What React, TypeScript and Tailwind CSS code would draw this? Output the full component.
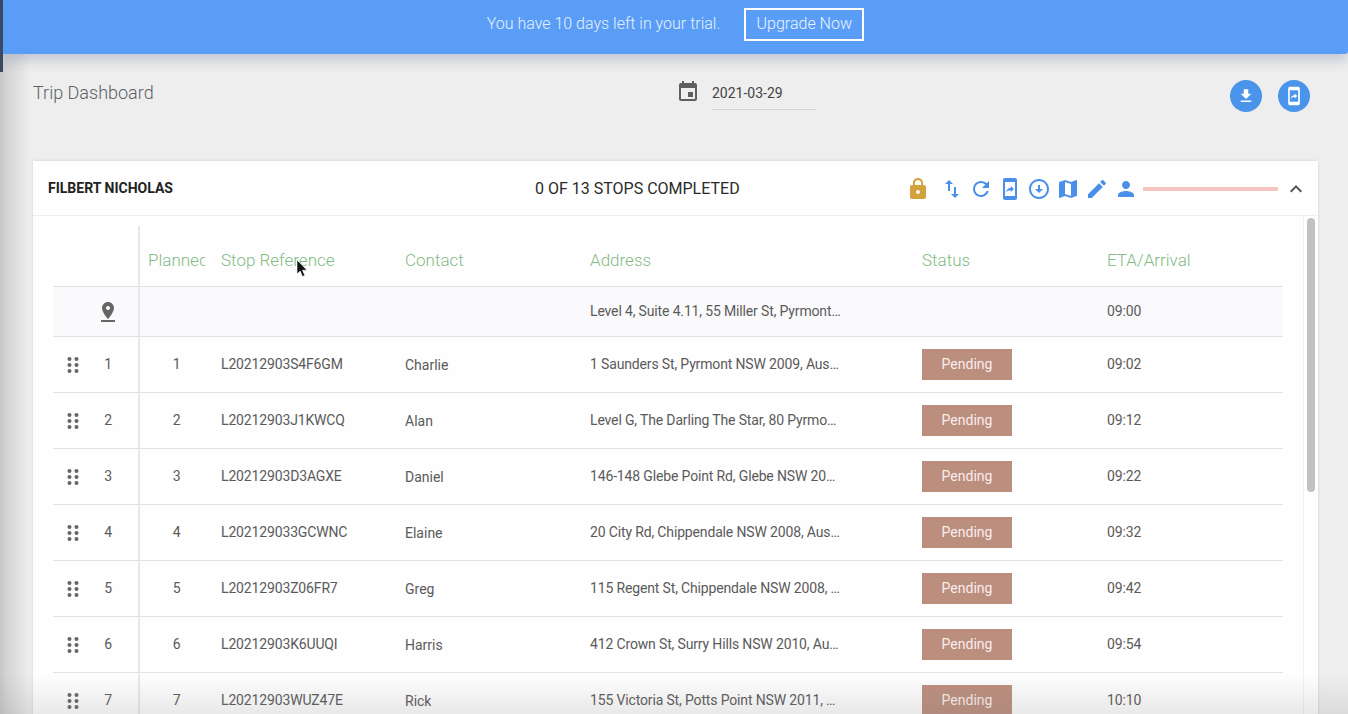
const P = {
  lock: "M18 8h-1V6c0-2.76-2.24-5-5-5S7 3.24 7 6v2H6c-1.1 0-2 .9-2 2v10c0 1.1.9 2 2 2h12c1.1 0 2-.9 2-2V10c0-1.1-.9-2-2-2zm-6 9c-1.1 0-2-.9-2-2s.9-2 2-2 2 .9 2 2-.9 2-2 2zm3.1-9H8.9V6c0-1.71 1.39-3.1 3.1-3.1 1.71 0 3.1 1.39 3.1 3.1v2z",
  swap: "M16 17.01V10h-2v7.01h-3L15 21l4-3.99h-3zM9 3L5 6.99h3V14h2V6.99h3L9 3z",
  refresh: "M17.65 6.35C16.2 4.9 14.21 4 12 4c-4.42 0-7.99 3.58-7.99 8s3.57 8 7.99 8c3.73 0 6.84-2.55 7.73-6h-2.08c-.82 2.33-3.04 4-5.65 4-3.31 0-6-2.69-6-6s2.69-6 6-6c1.66 0 3.14.69 4.22 1.78L13 11h7V4l-2.35 2.35z",
  mobile: "M17 1.01L7 1c-1.1 0-2 .9-2 2v18c0 1.1.9 2 2 2h10c1.1 0 2-.9 2-2V3c0-1.1-.9-1.99-2-1.99zM17 19H7V5h10v14zm-4.2-5.76v1.75L16 12l-3.2-2.98v1.7c-3.11.43-4.35 2.56-4.8 4.7 1.11-1.5 2.58-2.18 4.8-2.18z",
  circleDown: "M12 4c4.41 0 8 3.59 8 8s-3.59 8-8 8-8-3.59-8-8 3.59-8 8-8m0-2C6.48 2 2 6.48 2 12s4.48 10 10 10 10-4.48 10-10S17.52 2 12 2zm1 10V8h-2v4H8l4 4 4-4h-3z",
  map: "M20.5 3l-.16.03L15 5.1 9 3 3.36 4.9c-.21.07-.36.25-.36.48V20.5c0 .28.22.5.5.5l.16-.03L9 18.9l6 2.1 5.64-1.9c.21-.07.36-.25.36-.48V3.5c0-.28-.22-.5-.5-.5zM15 19l-6-2.11V5l6 2.11V19z",
  edit: "M3 17.25V21h3.75L17.81 9.94l-3.75-3.75L3 17.25zM20.71 7.04c.39-.39.39-1.02 0-1.41l-2.34-2.34c-.39-.39-1.02-.39-1.41 0l-1.83 1.83 3.75 3.75 1.83-1.83z",
  person: "M12 12c2.21 0 4-1.79 4-4s-1.79-4-4-4-4 1.79-4 4 1.79 4 4 4zm0 2c-2.67 0-8 1.34-8 4v2h16v-2c0-2.66-5.33-4-8-4z",
  less: "M12 8l-6 6 1.41 1.41L12 10.83l4.59 4.58L18 14z",
  getApp: "M19 9h-4V3H9v6H5l7 7 7-7zM5 18v2h14v-2H5z",
  event: "M17 12h-5v5h5v-5zM16 1v2H8V1H6v2H5c-1.11 0-1.99.9-1.99 2L3 19c0 1.1.89 2 2 2h14c1.1 0 2-.9 2-2V5c0-1.1-.9-2-2-2h-1V1h-2zm3 18H5V8h14v11z",
  pin: "M18 8c0-3.31-2.69-6-6-6S6 4.69 6 8c0 4.5 6 11 6 11s6-6.5 6-11zm-8 0c0-1.1.9-2 2-2s2 .9 2 2-.89 2-2 2c-1.1 0-2-.9-2-2zM5 20v2h14v-2H5z",
};

function Icon({ d, className }: { d: string; className: string }) {
  return (
    <svg viewBox="0 0 24 24" fill="currentColor" className={className}>
      <path d={d} />
    </svg>
  );
}

function Drag() {
  return (
    <svg viewBox="0 0 12 16" fill="currentColor" className="h-[16px] w-[12px] text-[#666]">
      {[2, 8, 14].map((y) => (
        <g key={y}>
          <circle cx="2.5" cy={y} r="2" />
          <circle cx="9.5" cy={y} r="2" />
        </g>
      ))}
    </svg>
  );
}

const stops = [
  ["1", "L20212903S4F6GM", "Charlie", "1 Saunders St, Pyrmont NSW 2009, Aus…", "09:02"],
  ["2", "L20212903J1KWCQ", "Alan", "Level G, The Darling The Star, 80 Pyrmo…", "09:12"],
  ["3", "L20212903D3AGXE", "Daniel", "146-148 Glebe Point Rd, Glebe NSW 20…", "09:22"],
  ["4", "L202129033GCWNC", "Elaine", "20 City Rd, Chippendale NSW 2008, Aus…", "09:32"],
  ["5", "L20212903Z06FR7", "Greg", "115 Regent St, Chippendale NSW 2008, …", "09:42"],
  ["6", "L20212903K6UUQI", "Harris", "412 Crown St, Surry Hills NSW 2010, Au…", "09:54"],
  ["7", "L20212903WUZ47E", "Rick", "155 Victoria St, Potts Point NSW 2011, …", "10:10"],
];

const grid = "grid grid-cols-[87px_81px_184px_185px_332px_185px_1fr] border-b border-[#e2e1ea]";
const firstCol = "flex items-center border-r-2 border-[#e8e8ec]";

export default function App() {
  return (
    <div className="relative flex h-[714px] overflow-hidden bg-[#eeeeee] font-['Roboto',sans-serif] text-[14px] tracking-[-0.15px] text-[#5a5a5a]">
      <div className="w-[3px] shrink-0 bg-[#c9c9c9]">
        <div className="h-[72px] bg-[#39495f]" />
      </div>
      <div className="relative min-w-0 flex-1 bg-gradient-to-r from-[#cfcfcf] from-0% via-[#eeeeee] via-[2%] to-[#eeeeee]">
        <div className="flex h-[54px] items-center justify-center rounded-br-[3px] bg-[#5a9df6] pb-[6px] tracking-normal shadow-[0_6px_14px_rgba(70,90,130,0.28)]">
          <span className="mr-[24px] text-[16px] font-light text-[#e6f0fd]">You have 10 days left in your trial.</span>
          <span className="flex h-[33px] w-[120px] items-center justify-center border-2 border-white text-[16px] font-light text-[#eaf3fe]">Upgrade Now</span>
        </div>

        <div className="flex h-[107px] pl-[30px] pr-[38px] tracking-normal">
          <div className="w-[643px] pt-[28px] text-[18px] leading-[22px] font-light text-[#5b5f66]">Trip Dashboard</div>
          <div className="flex h-[56px] w-[140px] items-start pt-[26px]">
            <Icon d={P.event} className="h-[24px] w-[24px] shrink-0 text-[#5f5f5f]" />
            <div className="ml-[12px] h-[30px] w-[104px] shrink-0 border-b border-[#d4d4d4] pt-[2px] text-[14px] leading-[22px] text-[#444]">2021-03-29</div>
          </div>
          <div className="ml-auto flex gap-[16px] pt-[26px]">
            <div className="flex h-[32px] w-[32px] items-center justify-center rounded-full bg-[#4a94ec] text-white">
              <Icon d={P.getApp} className="h-[18px] w-[18px]" />
            </div>
            <div className="flex h-[32px] w-[32px] items-center justify-center rounded-full bg-[#4a94ec] text-white">
              <Icon d={P.mobile} className="h-[20px] w-[20px]" />
            </div>
          </div>
        </div>

        <div className="ml-[30px] w-[1285px] bg-[#fefefe] tracking-normal shadow-[0_0_3px_rgba(0,0,0,0.12)]">
          <div className="flex h-[55px] items-center border-b border-[#eeeeee] px-[15px] pt-[1px]">
            <div className="w-[487px] shrink-0 text-[14px] font-bold text-[#222]">FILBERT NICHOLAS</div>
            <div className="w-[371px] shrink-0 text-[16px] font-normal text-[#2a2a2a]">0 OF 13 STOPS COMPLETED</div>
            <div className="flex shrink-0 gap-[5px] text-[#4a90ea]">
              <Icon d={P.lock} className="h-[24px] w-[24px] text-[#d4a13f]" />
              <Icon d={P.swap} className="ml-[5px] h-[24px] w-[24px]" />
              <Icon d={P.refresh} className="h-[24px] w-[24px]" />
              <Icon d={P.mobile} className="h-[24px] w-[24px]" />
              <Icon d={P.circleDown} className="h-[24px] w-[24px]" />
              <Icon d={P.map} className="h-[24px] w-[24px]" />
              <Icon d={P.edit} className="h-[24px] w-[24px]" />
              <Icon d={P.person} className="h-[24px] w-[24px]" />
            </div>
            <div className="ml-[5px] h-[4px] w-[135px] shrink-0 bg-[#f7c5c1]" />
            <Icon d={P.less} className="ml-[6px] h-[24px] w-[24px] shrink-0 text-[#555]" />
          </div>

          <div className="flex h-[600px]">
            <div className="ml-[20px] w-[1230px] pt-[10px] tracking-[-0.15px]">
              <div className={`${grid} h-[61px] text-[17px] font-light tracking-normal text-[#83bb85]`}>
                <div className={firstCol} />
                <div className="ml-[8px] flex w-[57px] items-center overflow-hidden whitespace-nowrap pt-[10px]">Planned</div>
                <div className="flex items-center pt-[10px]">Stop Reference</div>
                <div className="flex items-center pt-[10px]">Contact</div>
                <div className="flex items-center pt-[10px]">Address</div>
                <div className="flex items-center pt-[10px]">Status</div>
                <div className="flex items-center pt-[10px]">ETA/Arrival</div>
              </div>
              <div className={`${grid} h-[50px] bg-[#fafafc]`}>
                <div className={`${firstCol} justify-end pr-[18px]`}>
                  <Icon d={P.pin} className="h-[24px] w-[24px] text-[#666]" />
                </div>
                <div />
                <div />
                <div />
                <div className="flex items-center">Level 4, Suite 4.11, 55 Miller St, Pyrmont…</div>
                <div />
                <div className="flex items-center pb-[1px]">09:00</div>
              </div>
              {stops.map(([n, ref, contact, address, eta]) => (
                <div key={n} className={`${grid} h-[56px]`}>
                  <div className={firstCol}>
                    <div className="ml-[14px] flex w-[12px] justify-center"><Drag /></div>
                    <div className="ml-[14px] w-[30px] text-center">{n}</div>
                  </div>
                  <div className="ml-[8px] flex w-[57px] items-center justify-center">{n}</div>
                  <div className="flex items-center">{ref}</div>
                  <div className="flex items-center pt-[2px] tracking-normal">{contact}</div>
                  <div className="flex items-center">{address}</div>
                  <div className="flex items-center">
                    <div className="flex h-[31px] w-[90px] items-center justify-center bg-[#bc8e7e] tracking-normal text-[#f7efec]">Pending</div>
                  </div>
                  <div className="flex items-center">{eta}</div>
                </div>
              ))}
            </div>
            <div className="ml-[20px] w-[15px] border-l border-[#efeff2] pt-[2px] pl-[3px]">
              <div className="h-[274px] w-[8px] rounded-[4px] bg-[#c1c1c1]" />
            </div>
          </div>
        </div>
      </div>

      <svg viewBox="0 0 12 18" className="absolute top-[260px] left-[296px] h-[18px] w-[12px]">
        <path d="M1 0v14l3.2-3 2.2 5.5 2.4-1-2.3-5.3H11z" fill="#111" stroke="#fff" strokeWidth="0.6" />
      </svg>
      <div className="pointer-events-none absolute right-0 bottom-0 left-0 h-[40px] bg-gradient-to-b from-transparent to-[rgba(120,120,120,0.16)]" />
    </div>
  );
}
